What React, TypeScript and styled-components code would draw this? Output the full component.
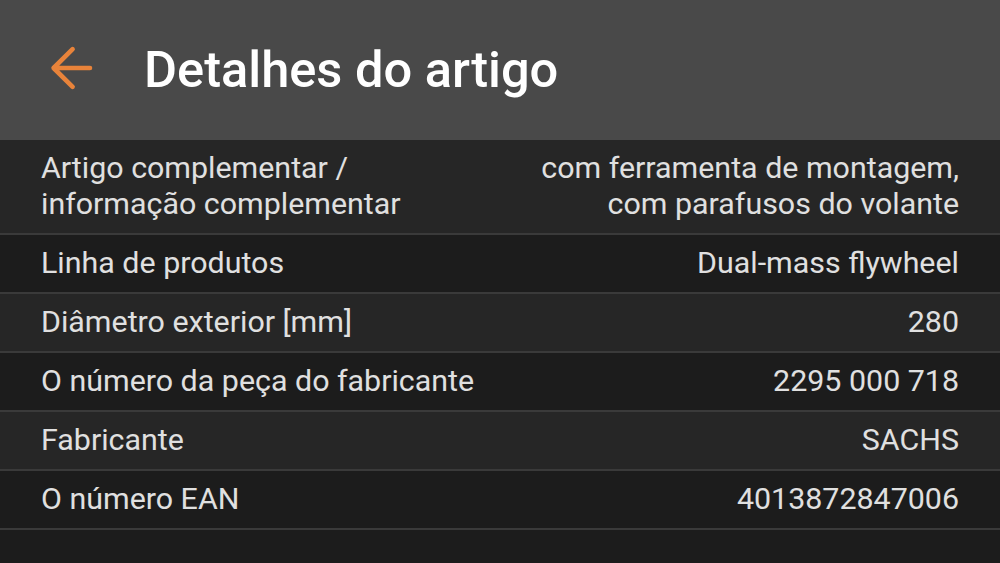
import { createGlobalStyle, styled } from 'styled-components';

interface Detail {
  label: string[];
  value: string[];
}

const details: Detail[] = [
  {
    label: ['Artigo complementar /', 'informação complementar'],
    value: ['com ferramenta de montagem,', 'com parafusos do volante'],
  },
  { label: ['Linha de produtos'], value: ['Dual-mass flywheel'] },
  { label: ['Diâmetro exterior [mm]'], value: ['280'] },
  { label: ['O número da peça do fabricante'], value: ['2295 000 718'] },
  { label: ['Fabricante'], value: ['SACHS'] },
  { label: ['O número EAN'], value: ['4013872847006'] },
];

const GlobalStyle = createGlobalStyle`
  html, body {
    margin: 0;
    padding: 0;
    background: #1c1c1c;
  }
  body {
    font-family: Roboto, "Noto Sans", sans-serif;
  }
`;

const Page = styled.div`
  width: 1000px;
  height: 563px;
  overflow: hidden;
  background: #1c1c1c;
  display: flex;
  flex-direction: column;
`;

const Toolbar = styled.header`
  height: 140px;
  flex-shrink: 0;
  background: #494949;
  display: flex;
  align-items: center;
  padding-left: 48px;
  box-sizing: border-box;
`;

const BackButton = styled.button`
  width: 48px;
  height: 48px;
  border: none;
  background: none;
  padding: 0;
  display: flex;
  align-items: center;
  justify-content: center;
  margin-right: 48px;
  margin-top: -4px;
`;

const Title = styled.h1`
  margin: 0;
  font-family: Roboto, sans-serif;
  font-weight: 500;
  font-size: 50.6px;
  color: #ffffff;
  margin-top: -2px;
`;

const List = styled.div`
  display: flex;
  flex-direction: column;
`;

const Row = styled.div<{ $odd: boolean; $tall: boolean }>`
  display: flex;
  justify-content: space-between;
  align-items: center;
  min-height: ${p => (p.$tall ? 95 : 59)}px;
  padding: 0 41px;
  box-sizing: border-box;
  background: ${p => (p.$odd ? '#1c1c1c' : '#262626')};
  border-bottom: 2px solid #3a3a3a;
  font-size: 30.4px;
  line-height: 36px;
  color: #e0e0e0;
`;

const Label = styled.div`
  text-align: left;
  margin-top: -2px;
`;

const Value = styled.div`
  text-align: right;
  margin-top: -2px;
`;

function ArrowBack() {
  return (
    <svg width="48" height="48" viewBox="0 0 24 24" fill="none">
      <path
        d="M21 12H2.8M12.3 2.6L2.8 12L12.3 21.4"
        stroke="#e8833a"
        strokeWidth="2.3"
        strokeLinecap="round"
        strokeLinejoin="round"
      />
    </svg>
  );
}

export default function App() {
  return (
    <Page>
      <GlobalStyle />
      <Toolbar>
        <BackButton aria-label="Voltar">
          <ArrowBack />
        </BackButton>
        <Title>Detalhes do artigo</Title>
      </Toolbar>
      <List>
        {details.map((d, index) => (
          <Row key={index} $odd={index % 2 === 1} $tall={d.label.length > 1}>
            <Label>
              {d.label.map((line, i) => (
                <div key={i}>{line}</div>
              ))}
            </Label>
            <Value>
              {d.value.map((line, i) => (
                <div key={i}>{line}</div>
              ))}
            </Value>
          </Row>
        ))}
      </List>
    </Page>
  );
}
